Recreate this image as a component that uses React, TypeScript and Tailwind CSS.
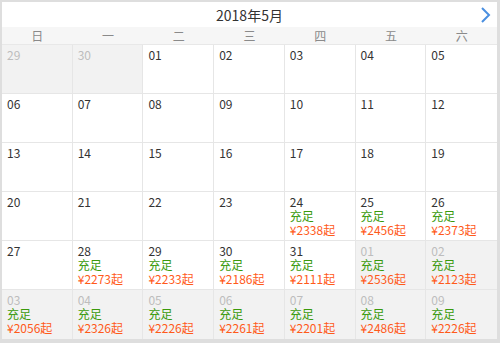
import React from "react";

type Cell = { d: string; other?: boolean; price?: string };

const rows: Cell[][] = [
  [{ d: "29", other: true }, { d: "30", other: true }, { d: "01" }, { d: "02" }, { d: "03" }, { d: "04" }, { d: "05" }],
  [{ d: "06" }, { d: "07" }, { d: "08" }, { d: "09" }, { d: "10" }, { d: "11" }, { d: "12" }],
  [{ d: "13" }, { d: "14" }, { d: "15" }, { d: "16" }, { d: "17" }, { d: "18" }, { d: "19" }],
  [{ d: "20" }, { d: "21" }, { d: "22" }, { d: "23" }, { d: "24", price: "2338" }, { d: "25", price: "2456" }, { d: "26", price: "2373" }],
  [{ d: "27" }, { d: "28", price: "2273" }, { d: "29", price: "2233" }, { d: "30", price: "2186" }, { d: "31", price: "2111" }, { d: "01", other: true, price: "2536" }, { d: "02", other: true, price: "2123" }],
  [{ d: "03", other: true, price: "2056" }, { d: "04", other: true, price: "2326" }, { d: "05", other: true, price: "2226" }, { d: "06", other: true, price: "2261" }, { d: "07", other: true, price: "2201" }, { d: "08", other: true, price: "2486" }, { d: "09", other: true, price: "2226" }],
];

const week = ["日", "一", "二", "三", "四", "五", "六"];

export default function App() {
  return (
    <div
      className="w-[500px] h-[343px] bg-white border-l-2 border-t-2 border-r-[3px] border-b-4 border-[#dedede] flex flex-col overflow-hidden"
      style={{ fontFamily: '"Noto Sans CJK SC", "Noto Sans", sans-serif' }}
    >
      <div className="h-[25px] flex items-center justify-center relative">
        <span className="text-[14px] text-[#333] leading-none">2018年5月</span>
        <svg className="absolute right-[6px] top-[4px]" width="12" height="18" viewBox="0 0 12 18">
          <path d="M3 2 L10 9 L3 16" fill="none" stroke="#4a8fe0" strokeWidth="2" />
        </svg>
      </div>
      <div className="h-[18px] grid grid-cols-7 bg-[#f6f6f6] border-b border-[#e8e8e8]">
        {week.map((w) => (
          <div key={w} className="flex items-center justify-center text-[12px] text-[#8a8a8a] leading-none">
            {w}
          </div>
        ))}
      </div>
      <div className="flex-1 grid grid-cols-7 grid-rows-6">
        {rows.flatMap((r, ri) =>
          r.map((c, ci) => (
            <div
              key={`${ri}-${ci}`}
              className={`${c.other ? "bg-[#f2f2f2]" : "bg-white"} ${ci < 6 ? "border-r" : ""} ${ri < 5 ? "border-b" : ""} border-[#e6e6e6] pl-[5px] pt-[3px] text-[12px] leading-[14px]`}
            >
              <div className={c.other ? "text-[#bdbdbd]" : "text-[#333]"}>{c.d}</div>
              {c.price && (
                <>
                  <div className="text-[#3a9a0c]">充足</div>
                  <div className="text-[#ff5a1a]">¥{c.price}起</div>
                </>
              )}
            </div>
          ))
        )}
      </div>
    </div>
  );
}
